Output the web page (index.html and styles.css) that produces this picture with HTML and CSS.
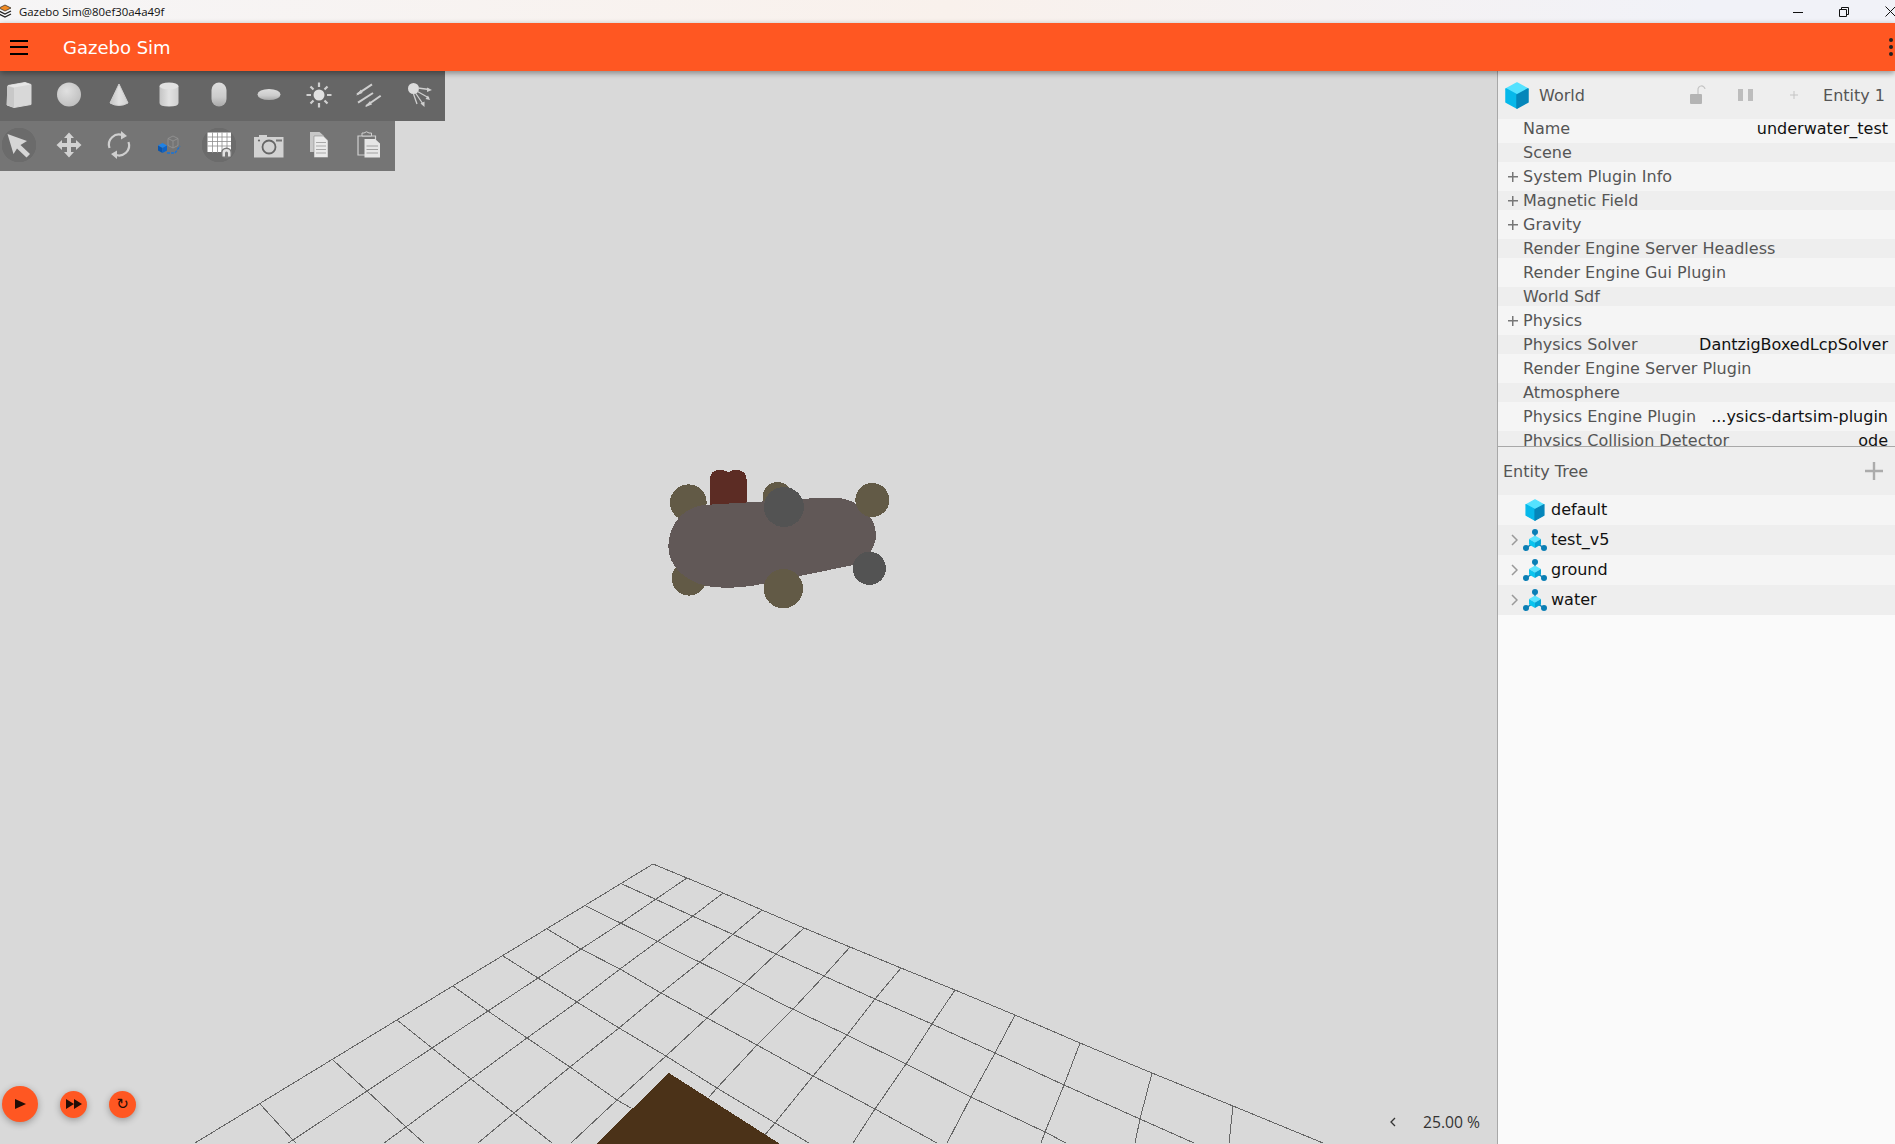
FILE: index.html
```html
<!DOCTYPE html>
<html lang="en">

<head>
    <meta charset="UTF-8">
    <title>Gazebo Sim</title>
    <link rel="stylesheet" href="styles.css">
</head>

<body>
    <svg class="defs" width="0" height="0">
        <defs>
            <linearGradient id="cyl" x1="0" x2="1" y1="0" y2="0">
                <stop offset="0" stop-color="#c4c4c4" />
                <stop offset="0.5" stop-color="#e2e2e2" />
                <stop offset="1" stop-color="#cfcfcf" />
            </linearGradient>
            <linearGradient id="cap" x1="0" x2="0" y1="0" y2="1">
                <stop offset="0" stop-color="#dedede" />
                <stop offset="0.6" stop-color="#cccccc" />
                <stop offset="1" stop-color="#a9a9a9" />
            </linearGradient>
            <radialGradient id="ball" cx="0.4" cy="0.35" r="0.75">
                <stop offset="0" stop-color="#e0e0e0" />
                <stop offset="1" stop-color="#bcbcbc" />
            </radialGradient>
            <symbol id="cube" viewBox="0 0 24 27">
                <path d="M12 1 23 7 12 13 1 7Z" fill="#55e2ff" stroke="#55e2ff" stroke-width="1.5" stroke-linejoin="round" />
                <path d="M1 7 12 13V26L1 20Z" fill="#06b8ea" stroke="#06b8ea" stroke-width="1.5" stroke-linejoin="round" />
                <path d="M23 7 12 13V26L23 20Z" fill="#0586ba" stroke="#0586ba" stroke-width="1.5" stroke-linejoin="round" />
            </symbol>
            <symbol id="model" viewBox="0 0 24 22">
                <path d="M12 3V9M3 19 9 15M21 19 15 15" stroke="#0a7fb5" stroke-width="1.5" />
                <path d="M12 6.500 18 10 12 13.500 6 10Z" fill="#5ce5ff" />
                <path d="M6 10 12 13.500V19L6 15.500Z" fill="#0cc4ee" />
                <path d="M18 10 12 13.500V19L18 15.500Z" fill="#07a3d4" />
                <circle cx="12" cy="3" r="3" fill="#0a7fb5" />
                <circle cx="3" cy="19" r="3" fill="#0a7fb5" />
                <circle cx="21" cy="19" r="3" fill="#0a7fb5" />
            </symbol>
        </defs>
    </svg>

    <div class="titlebar">
        <svg class="app-logo" width="13" height="16" viewBox="0 0 13 16">
            <path d="M6 1 12 4 6 7 0 4Z" fill="#f08a24" stroke="#222" stroke-width="0.7" />
            <path d="M0 7 6 10 12 7M0 10 6 13 12 10" fill="none" stroke="#222" stroke-width="1.300" />
        </svg>
        <span class="title-text">Gazebo Sim@80ef30a4a49f</span>
        <div class="win-btns">
            <svg width="10" height="10" viewBox="0 0 10 10"><path d="M0 5.500H10" stroke="#111" /></svg>
            <svg width="10" height="10" viewBox="0 0 10 10"><path d="M.5 2.500H7.500V9.500H.5ZM2.500 2.500V.5H9.500V7.500H7.500" fill="none" stroke="#111" /></svg>
            <svg width="11" height="11" viewBox="0 0 11 11"><path d="M.5 .5 10.500 10.500M10.500 .5 .5 10.500" stroke="#111" /></svg>
        </div>
    </div>

    <div class="appbar">
        <div class="burger"><i></i><i></i><i></i></div>
        <div class="appname">Gazebo Sim</div>
        <div class="kebab"><i></i><i></i><i></i></div>
    </div>

    <div class="main">
        <div class="viewport">
            <svg class="scene" viewBox="0 71 1497 1073" width="1497" height="1073">
                <g class="grid">
                    <!-- outer edges -->
                    <polyline points="653,864 195,1143" />
                    <polyline points="653,864 687,878 723,893 762,910 804,928 850,947 901,968 955,990 1015,1015 1080,1043 1152,1073 1233,1106 1323,1143" />
                    <!-- lines running down to the right -->
                    <polyline points="622,884 776,954 824,976 875,999 932,1024 995,1053 1064,1085 1140,1119 1194,1143" />
                    <polyline points="586,906 744,984 780,1003 847,1035 906,1064 971,1097 1045,1132 1066,1143" />
                    <polyline points="547,929 581,949 620,969 661,993 707,1018 757,1045 813,1076 875,1109 937,1143" />
                    <polyline points="503,956 538,978 577,1002 619,1028 666,1056 717,1088 775,1123 809,1143" />
                    <polyline points="453,986 488,1011 527,1038 570,1067 617,1100 631,1108" />
                    <polyline points="397,1020 432,1048 471,1079 514,1113 552,1143" />
                    <polyline points="333,1060 367,1091 406,1127 424,1143" />
                    <polyline points="260,1104 293,1140 296,1143" />
                    <!-- lines running down to the left -->
                    <polyline points="687,878 656,899 621,923 581,949 538,978 488,1011 432,1048 367,1091 293,1140 288,1143" />
                    <polyline points="723,893 693,916 658,941 620,969 577,1002 527,1038 471,1079 406,1127 384,1143" />
                    <polyline points="762,910 732,935 700,962 661,993 619,1028 570,1067 514,1113 478,1143" />
                    <polyline points="804,928 776,954 744,984 707,1018 666,1056 617,1100 571,1143" />
                    <polyline points="850,947 824,976 794,1008 757,1045 717,1088 709,1097" />
                    <polyline points="901,968 875,999 847,1035 813,1076 775,1123 758,1143" />
                    <polyline points="955,990 932,1024 906,1064 875,1109 853,1143" />
                    <polyline points="1015,1015 995,1053 971,1097 947,1143" />
                    <polyline points="1080,1043 1064,1085 1045,1132 1041,1143" />
                    <polyline points="1152,1073 1140,1119 1135,1143" />
                    <polyline points="1233,1106 1229,1143" />
                </g>
                <path class="ground" d="M669 1073 596 1144H780Z" />
                <g class="robot" transform="translate(640 450) scale(.3333)">
                    <path class="part-red" d="M210 170V90Q210 60 240 60Q258 60 265 68Q272 60 290 60Q320 60 320 90V170Z" />
                    <circle class="olive" cx="145" cy="158" r="55" />
                    <circle class="olive" cx="147" cy="385" r="52" />
                    <circle class="olive" cx="412" cy="140" r="44" />
                    <path class="hull" d="M190 165 360 155 500 146Q550 142 590 143C650 147 708 195 708 255 708 290 680 335 640 345L480 378 350 405C310 413 240 417 200 408 130 392 85 345 85 290 85 225 130 172 190 165Z" />
                    <circle class="olive" cx="697" cy="150" r="51" />
                    <circle class="olive" cx="430" cy="416" r="59" />
                    <circle class="dark" cx="432" cy="171" r="60" />
                    <circle class="dark" cx="688" cy="355" r="50" />
                </g>
            </svg>

            <div class="tools">
                <div class="toolrow row-shapes">
                    <div class="tool"><svg viewBox="0 0 38 38"><path d="M8 9.500 25 6.500 31 8.500V28.500L14 31.500 7 29Z" fill="#d8d8d8" stroke="#d8d8d8" stroke-linejoin="round" /><path d="M8 9.500 14 11.500 31 8.500 25 6.500Z" fill="#e6e6e6" /><path d="M7 10 14 12V31.500L7 29Z" fill="#c8c8c8" /></svg></div>
                    <div class="tool"><svg viewBox="0 0 38 38"><circle cx="19" cy="18.500" r="12" fill="url(#ball)" /></svg></div>
                    <div class="tool"><svg viewBox="0 0 38 38"><path d="M19 8 10 27Q19 32 28 27Z" fill="url(#cyl)" stroke="#d0d0d0" stroke-linejoin="round" /></svg></div>
                    <div class="tool"><svg viewBox="0 0 38 38"><path d="M9.500 10V27Q9.500 30.500 19 30.500T28.500 27V10Z" fill="url(#cyl)" /><ellipse cx="19" cy="10" rx="9.500" ry="3.500" fill="#e2e2e2" /></svg></div>
                    <div class="tool"><svg viewBox="0 0 38 38"><rect x="11.500" y="6.500" width="15" height="24" rx="7.500" fill="url(#cap)" /></svg></div>
                    <div class="tool"><svg viewBox="0 0 38 38"><ellipse cx="19" cy="18.500" rx="11.500" ry="5.500" fill="url(#cap)" /></svg></div>
                    <div class="tool"><svg viewBox="0 0 38 38"><circle cx="19" cy="19" r="5.500" fill="#e0e0e0" /><path d="M19 6.500V11M19 27V31.500M6.500 19H11M27 19H31.500M10.500 10.500 13.500 13.500M24.500 24.500 27.500 27.500M10.500 27.500 13.500 24.500M24.500 13.500 27.500 10.500" stroke="#d0d0d0" stroke-width="2.200" /></svg></div>
                    <div class="tool"><svg viewBox="0 0 38 38"><path d="M7 18.300 22 8.300M8 26.700 23 17M16 30 30.700 19.700" stroke="#cfcfcf" stroke-width="2" /><path d="M6 19.500 11 13.500 12.500 17ZM15 31 20 25 22 28.500Z" fill="#cfcfcf" /></svg></div>
                    <div class="tool"><svg viewBox="0 0 38 38"><circle cx="13.500" cy="12.500" r="5.500" fill="#dcdcdc" /><path d="M18 12 29 13.500M17.500 15.500 29 22M15.500 17 23 28M13.500 18 17 28" stroke="#cfcfcf" stroke-width="1.300" /><path d="M32 14 27 16 27 11.500ZM30 24 25.500 23 28 19.500ZM24.500 31 20.500 27.500 24.500 25.500Z" fill="#cfcfcf" /></svg></div>
                </div>
                <div class="toolrow row-actions">
                    <div class="tool selected"><svg viewBox="0 0 38 38"><path d="M7.500 8 27 15 20.500 19 30 28 26.500 31.500 17 22.500 13.500 28Z" fill="#d6d6d6" /></svg></div>
                    <div class="tool"><svg viewBox="0 0 38 38"><path d="M19 6.500 24 12H21V17H26V14L31.500 19 26 24V21H21V26H24L19 31.500 14 26H17V21H12V24L6.500 19 12 14V17H17V12H14Z" fill="#d2d2d2" /></svg></div>
                    <div class="tool"><svg viewBox="0 0 38 38"><path d="M9.500 22A10 10 0 0 1 23 9.500M28.500 16A10 10 0 0 1 15 28.500" fill="none" stroke="#cfcfcf" stroke-width="2.200" /><path d="M21 5 27 10 21 13.500ZM17 33 11 28 17 24.500Z" fill="#cfcfcf" /></svg></div>
                    <div class="tool"><svg viewBox="0 0 38 38"><path d="M23 10 28 12.500V19.500L23 22 18 19.500V12.500ZM18 12.500 23 15 28 12.500M23 15V22" fill="none" stroke="#969696" stroke-width=".8" /><path d="M17 27H25L30 20" fill="none" stroke="#1873d6" stroke-width="1.300" stroke-dasharray="3 1" /><path d="M12.500 17 17 19.500 12.500 22 8 19.500Z" fill="#1e82e6" /><path d="M8 19.500 12.500 22V27L8 24.500Z" fill="#0a55ad" /><path d="M17 19.500 12.500 22V27L17 24.500Z" fill="#0b63c9" /></svg></div>
                    <div class="tool selected"><svg viewBox="0 0 38 38"><path d="M7.500 6.500H31V26H7.500Z" fill="#fff" /><path d="M12.500 6.500V27M17.500 6.500V27M22 6.500V27M27 6.500V27M7.500 11H31M7.500 15.500H31M7.500 20H31" stroke="#8e8e8e" stroke-width=".8" /><circle cx="26.500" cy="27" r="5.500" fill="#777" /><path d="M22.500 30.500V27A4 4 0 0 1 30.500 27V30.500H28V27A1.500 1.500 0 0 0 25 27V30.500Z" fill="#e2e2e2" /></svg></div>
                    <div class="tool"><svg viewBox="0 0 38 38"><path d="M4 11H9V9H17V11H33.500V31.500H4Z" fill="#d2d2d2" /><circle cx="19" cy="21" r="6.500" fill="none" stroke="#666" stroke-width="1.800" /><path d="M26 13.500H32V15.500H26Z" fill="#757575" /><circle cx="9" cy="14.500" r="1.100" fill="#666" /></svg></div>
                    <div class="tool"><svg viewBox="0 0 38 38"><path d="M10 6H19.500L24 10V26H10Z" fill="#c8c8c8" /><path d="M14 10H23.500L28 14.500V31.500H14Z" fill="#eaeaea" stroke="#7a7a7a" stroke-width=".5" /><path d="M16 16.500H26M16 20H26M16 23.500H26M16 27H26" stroke="#a8a8a8" /></svg></div>
                    <div class="tool"><svg viewBox="0 0 38 38"><path d="M8 10H25.500V29H8Z" fill="none" stroke="#d0d0d0" stroke-width="1.200" /><path d="M12 10V7H14Q16.500 4.500 19 7H21.500V10Z" fill="#757575" stroke="#d0d0d0" /><path d="M14.500 13H25L30 17.500V31.500H14.500Z" fill="#e6e6e6" /><path d="M16.500 20H28M16.500 23.500H28M16.500 27H28" stroke="#a0a0a0" /></svg></div>
                </div>
            </div>

            <div class="playback">
                <div class="play-btn big"><svg width="14" height="14" viewBox="0 0 14 14"><path d="M2 2 13 7 2 12Z" /></svg></div>
                <div class="play-btn"><svg width="16" height="10" viewBox="0 0 16 10"><path d="M0 0 8 5 0 10ZM8 0 16 5 8 10Z" /></svg></div>
                <div class="play-btn"><span class="step">↻</span></div>
            </div>

            <div class="stats">
                <svg width="6" height="10" viewBox="0 0 6 10"><path d="M5 1 1 5 5 9" fill="none" stroke="#333" stroke-width="1.300" /></svg>
                <span>25.00 %</span>
            </div>
        </div>

        <div class="panel">
            <div class="comp-head">
                <svg class="head-cube"><use href="#cube" /></svg>
                <span class="head-name">World</span>
                <svg class="head-lock" width="16" height="20" viewBox="0 0 16 20"><rect x="0" y="9" width="12" height="10" rx="1" fill="#b4b4b4" /><path d="M8 9V5A3.500 3.500 0 0 1 15 4" fill="none" stroke="#c4c4c4" stroke-width="1.200" /></svg>
                <svg class="head-pause" width="16" height="14" viewBox="0 0 16 14"><rect x="0" y="1" width="5" height="12" fill="#bdbdbd" /><rect x="10" y="1" width="5" height="12" fill="#bdbdbd" /></svg>
                <svg class="head-plus" width="8" height="8" viewBox="0 0 8 8"><path d="M4 0V8M0 4H8" stroke="#c4c4c4" /></svg>
                <span class="head-entity">Entity 1</span>
            </div>

            <div class="props">
                <div class="prop"><span class="key">Name</span><span class="val">underwater_test</span></div>
                <div class="prop"><span class="key">Scene</span></div>
                <div class="prop"><i class="expand"></i><span class="key">System Plugin Info</span></div>
                <div class="prop"><i class="expand"></i><span class="key">Magnetic Field</span></div>
                <div class="prop"><i class="expand"></i><span class="key">Gravity</span></div>
                <div class="prop"><span class="key">Render Engine Server Headless</span></div>
                <div class="prop"><span class="key">Render Engine Gui Plugin</span></div>
                <div class="prop"><span class="key">World Sdf</span></div>
                <div class="prop"><i class="expand"></i><span class="key">Physics</span></div>
                <div class="prop"><span class="key">Physics Solver</span><span class="val">DantzigBoxedLcpSolver</span></div>
                <div class="prop"><span class="key">Render Engine Server Plugin</span></div>
                <div class="prop"><span class="key">Atmosphere</span></div>
                <div class="prop"><span class="key">Physics Engine Plugin</span><span class="val">...ysics-dartsim-plugin</span></div>
                <div class="prop"><span class="key">Physics Collision Detector</span><span class="val">ode</span></div>
            </div>

            <div class="tree-head">
                <span>Entity Tree</span>
                <svg width="18" height="18" viewBox="0 0 18 18"><path d="M9 0V18M0 9H18" stroke="#ababab" stroke-width="2.400" /></svg>
            </div>

            <div class="tree">
                <div class="node"><svg class="node-cube"><use href="#cube" /></svg><span>default</span></div>
                <div class="node"><svg class="chev" width="7" height="12" viewBox="0 0 7 12"><path d="M1 1 6 6 1 11" fill="none" stroke="#999" stroke-width="1.500" /></svg><svg class="node-model"><use href="#model" /></svg><span>test_v5</span></div>
                <div class="node"><svg class="chev" width="7" height="12" viewBox="0 0 7 12"><path d="M1 1 6 6 1 11" fill="none" stroke="#999" stroke-width="1.500" /></svg><svg class="node-model"><use href="#model" /></svg><span>ground</span></div>
                <div class="node"><svg class="chev" width="7" height="12" viewBox="0 0 7 12"><path d="M1 1 6 6 1 11" fill="none" stroke="#999" stroke-width="1.500" /></svg><svg class="node-model"><use href="#model" /></svg><span>water</span></div>
            </div>
        </div>
    </div>
</body>

</html>
```

FILE: styles.css
```css
html,
body {
    margin: 0;
    padding: 0;
    height: 100%;
    overflow: hidden;
}

body {
    display: flex;
    flex-direction: column;
    font-family: "DejaVu Sans", sans-serif;
    background-color: #d9d9d9;
}

.defs {
    position: absolute;
}

/* window title */
.titlebar {
    height: 23px;
    display: flex;
    align-items: center;
    background: linear-gradient(90deg, #f6f5f6, #f9f1ec 50%, #f1f2f8 90%);
    font-family: "Open Sans", sans-serif;
    font-size: 11.4px;
    color: #111;
}

.app-logo {
    margin-left: -1px;
    margin-right: 7px;
}

.win-btns {
    margin-left: auto;
    display: flex;
    align-items: center;
    gap: 36px;
    margin-right: -1px;
}

/* orange bar */
.appbar {
    height: 48px;
    display: flex;
    align-items: center;
    background-color: #ff5722;
    box-shadow: 0 2px 6px rgba(0, 0, 0, 0.4);
    position: relative;
    z-index: 2;
}

.burger {
    width: 18px;
    margin-left: 10px;
    display: flex;
    flex-direction: column;
    gap: 4.5px;
}

.burger i {
    height: 2px;
    background-color: #000;
}

.appname {
    margin-left: 35px;
    font-size: 18px;
    color: #fff;
}

.kebab {
    margin-left: auto;
    margin-right: 2px;
    display: flex;
    flex-direction: column;
    gap: 3px;
}

.kebab i {
    width: 4px;
    height: 4px;
    border-radius: 50%;
    background-color: #222;
}

.main {
    flex: 1;
    display: flex;
    min-height: 0;
}

/* 3d view */
.viewport {
    width: 1497px;
    position: relative;
    overflow: hidden;
    background-color: #d9d9d9;
}

.scene {
    position: absolute;
    top: 0;
    left: 0;
}

.grid polyline {
    fill: none;
    stroke: #666;
    stroke-width: 1;
    shape-rendering: crispEdges;
}

.ground {
    fill: #4b3218;
    shape-rendering: crispEdges;
}

.robot {
    shape-rendering: crispEdges;
}

.hull {
    fill: #615857;
}

.olive {
    fill: #625a46;
}

.dark {
    fill: #535353;
}

.part-red {
    fill: #5c2c24;
}

.tools {
    position: absolute;
    top: 0;
    left: 0;
}

.toolrow {
    height: 50px;
    box-sizing: border-box;
    display: flex;
    align-items: center;
    gap: 12px;
    padding: 0 7px 2px 0;
    width: max-content;
}

.row-shapes {
    background-color: #666;
}

.row-actions {
    background-color: #757575;
}

.tool {
    width: 38px;
    height: 38px;
}

.tool svg {
    display: block;
    width: 38px;
    height: 38px;
}

.tool.selected {
    background: radial-gradient(circle, #6b6b6b 0, #6b6b6b 17px, transparent 17.5px);
}

/* play, step, reset */
.playback {
    position: absolute;
    left: 2px;
    bottom: 22px;
    display: flex;
    align-items: center;
    gap: 22px;
}

.play-btn {
    width: 27px;
    height: 27px;
    border-radius: 50%;
    display: flex;
    align-items: center;
    justify-content: center;
    background-color: #ff5722;
    box-shadow: 0 2px 7px rgba(0, 0, 0, 0.3);
    fill: #1f0d06;
    color: #1f0d06;
}

.play-btn.big {
    width: 36px;
    height: 36px;
}

.step {
    font-size: 15px;
    line-height: 1;
}

.stats {
    position: absolute;
    right: 17px;
    bottom: 11px;
    display: flex;
    align-items: center;
    gap: 27px;
    font-family: "Open Sans", sans-serif;
    font-size: 15.7px;
    color: #333;
}

/* right side */
.panel {
    width: 398px;
    box-sizing: border-box;
    border-left: 1px solid #a8a8a8;
    background-color: #fafafa;
    position: relative;
    z-index: 1;
    font-size: 16px;
}

.comp-head {
    height: 48px;
    display: flex;
    align-items: center;
    background-color: #eee;
    color: #555;
    white-space: nowrap;
}

.head-cube {
    width: 24px;
    height: 27px;
    margin-left: 7px;
}

.head-name {
    margin-left: 10px;
}

.head-lock {
    margin-left: auto;
}

.head-pause {
    margin-left: 32px;
}

.head-plus {
    margin-left: 36px;
}

.head-entity {
    margin-left: 25px;
    margin-right: 10px;
}

.props {
    height: 327px;
    overflow: hidden;
    display: flex;
    flex-direction: column;
    gap: 5px;
    background-color: #f5f5f5;
    border-bottom: 1px solid #a8a8a8;
}

.prop {
    flex: none;
    height: 19px;
    line-height: 19px;
    padding-left: 25px;
    padding-right: 7px;
    display: flex;
    justify-content: space-between;
    position: relative;
}

.prop:nth-child(even) {
    background-color: #eee;
}

.key {
    color: #555;
}

.val {
    color: #111;
}

.expand {
    position: absolute;
    left: 10px;
    top: 5px;
    width: 10px;
    height: 10px;
    background:
        linear-gradient(#777, #777) center / 10px 1.5px no-repeat,
        linear-gradient(#777, #777) center / 1.5px 10px no-repeat;
}

.tree-head {
    height: 48px;
    box-sizing: border-box;
    padding: 0 12px 0 5px;
    display: flex;
    align-items: center;
    justify-content: space-between;
    background-color: #eee;
    color: #555;
}

.node {
    height: 30px;
    box-sizing: border-box;
    display: flex;
    align-items: center;
    padding-left: 53px;
    padding-bottom: 2px;
    position: relative;
    background-color: #f5f5f5;
    color: #111;
}

.node:nth-child(even) {
    background-color: #eee;
}

.node svg {
    position: absolute;
}

.chev {
    left: 13px;
    top: 9px;
}

.node-cube {
    left: 27px;
    top: 4px;
    width: 20px;
    height: 22px;
}

.node-model {
    left: 25px;
    top: 4px;
    width: 24px;
    height: 22px;
}
```
